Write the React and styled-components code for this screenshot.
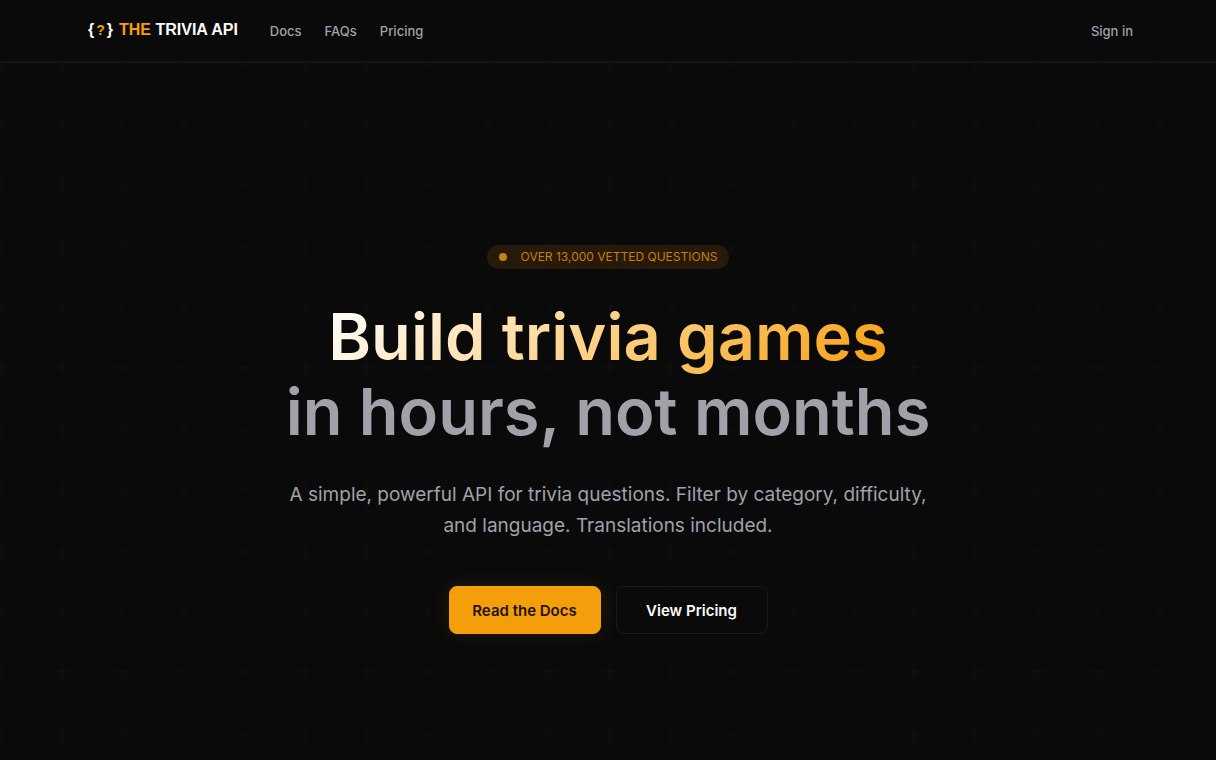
import React from 'react'
import styled, { createGlobalStyle } from 'styled-components'

const GlobalStyle = createGlobalStyle`
  * {
    box-sizing: border-box;
  }

  body {
    margin: 0;
    background: #0a0a0a;
    color: #fafafa;
    font-family: Inter, "Liberation Sans", sans-serif;
  }

  a {
    text-decoration: none;
  }
`

const Page = styled.div`
  display: flex;
  flex-direction: column;
  min-height: 100vh;
`

const Header = styled.header`
  border-bottom: 2px solid #151515;
`

const HeaderInner = styled.div`
  display: flex;
  align-items: center;
  justify-content: space-between;
  max-width: 1216px;
  height: 61px;
  margin: 0 auto;
  padding: 0 83px 0 88px;
`

const Nav = styled.nav`
  display: flex;
  align-items: center;
  gap: 23px;
`

const Logo = styled.a`
  display: flex;
  align-items: center;
  gap: 6px;
  margin-right: 9px;
  padding-bottom: 2px;
  color: #fafafa;
  font-family: "Liberation Sans", sans-serif;
  font-size: 16px;
  font-weight: 700;
  line-height: 20px;
  white-space: nowrap;
`

const Mark = styled.span`
  display: flex;
  align-items: center;
  gap: 2px;
`

const Accent = styled.span`
  color: #f59e0b;
`

const SmallAccent = styled(Accent)`
  font-size: 14px;
`

const NavLink = styled.a`
  color: #a1a1aa;
  font-size: 13px;
  font-weight: 500;
  line-height: 20px;
`

const Hero = styled.main`
  flex: 1;
  display: flex;
  flex-direction: column;
  align-items: center;
  padding: 182px 24px 64px;
  text-align: center;
  background-image:
    radial-gradient(circle, rgba(255, 255, 255, 0.008) 3px, transparent 4px),
    linear-gradient(to right, rgba(255, 255, 255, 0.009) 2px, transparent 2px),
    linear-gradient(to right, rgba(255, 255, 255, 0.006) 2px, transparent 2px),
    linear-gradient(to bottom, rgba(255, 255, 255, 0.006) 2px, transparent 2px);
  background-size: 61px 61px, 304px 100%, 304px 100%, 100% 304px;
  background-position: 31px 31px, 61px 0, 1px 0, 0 -1px;
`

const Badge = styled.div`
  display: flex;
  align-items: center;
  gap: 14px;
  height: 24px;
  padding: 0 12px;
  border-radius: 12px;
  background: #271a0a;
  color: #c77f0a;
  font-size: 12px;
  line-height: 16px;
  text-transform: uppercase;
`

const Dot = styled.span`
  width: 8px;
  height: 8px;
  border-radius: 50%;
  background: #c58213;
`

const Title = styled.h1`
  margin: 30px 0 0;
  color: #a1a1aa;
  font-size: 65px;
  font-weight: 600;
  line-height: 75px;
`

/* the extra padding keeps the descender of the g inside the clipped background */
const TitleGradient = styled.span`
  display: table;
  margin: 0 auto -8px;
  padding-bottom: 8px;
  background: linear-gradient(135deg, #fff 0%, #fdd58f 45%, #f59e0b 100%);
  background-clip: text;
  -webkit-background-clip: text;
  color: transparent;
`

const Lead = styled.p`
  max-width: 660px;
  margin: 30px 0 0;
  color: #a1a1aa;
  font-size: 19px;
  line-height: 31px;
`

const Actions = styled.div`
  display: flex;
  flex-wrap: wrap;
  justify-content: center;
  gap: 15px;
  margin-top: 45px;
`

const ButtonLink = styled.a`
  display: flex;
  align-items: center;
  justify-content: center;
  min-width: 152px;
  height: 48px;
  padding: 2px 16px 0;
  border: 1px solid ${props => (props.$primary ? '#f59e0b' : '#1a1a1a')};
  border-radius: 8px;
  background: ${props => (props.$primary ? '#f59e0b' : '#0a0a0a')};
  color: ${props => (props.$primary ? '#1c1404' : '#fafafa')};
  box-shadow: ${props => (props.$primary ? '0 0 20px rgba(245, 158, 11, 0.12)' : 'none')};
  font-size: 15px;
  font-weight: 600;
  line-height: 24px;
`

const links = ['Docs', 'FAQs', 'Pricing']

const App = () => (
  <Page>
    <GlobalStyle />
    <Header>
      <HeaderInner>
        <Nav>
          <Logo href="#">
            <Mark>{'{'}<SmallAccent>?</SmallAccent>{'}'}</Mark>
            <span><Accent>THE</Accent> TRIVIA API</span>
          </Logo>
          {links.map(name => (
            <NavLink key={name} href={`#${name.toLowerCase()}`}>{name}</NavLink>
          ))}
        </Nav>
        <NavLink href="#signin">Sign in</NavLink>
      </HeaderInner>
    </Header>
    <Hero>
      <Badge>
        <Dot />
        <span>Over 13,000 vetted questions</span>
      </Badge>
      <Title>
        <TitleGradient>Build trivia games</TitleGradient>
        in hours, not months
      </Title>
      <Lead>
        A simple, powerful API for trivia questions. Filter by category, difficulty, and language. Translations included.
      </Lead>
      <Actions>
        <ButtonLink $primary href="#docs">Read the Docs</ButtonLink>
        <ButtonLink href="#pricing">View Pricing</ButtonLink>
      </Actions>
    </Hero>
  </Page>
)

export default App
